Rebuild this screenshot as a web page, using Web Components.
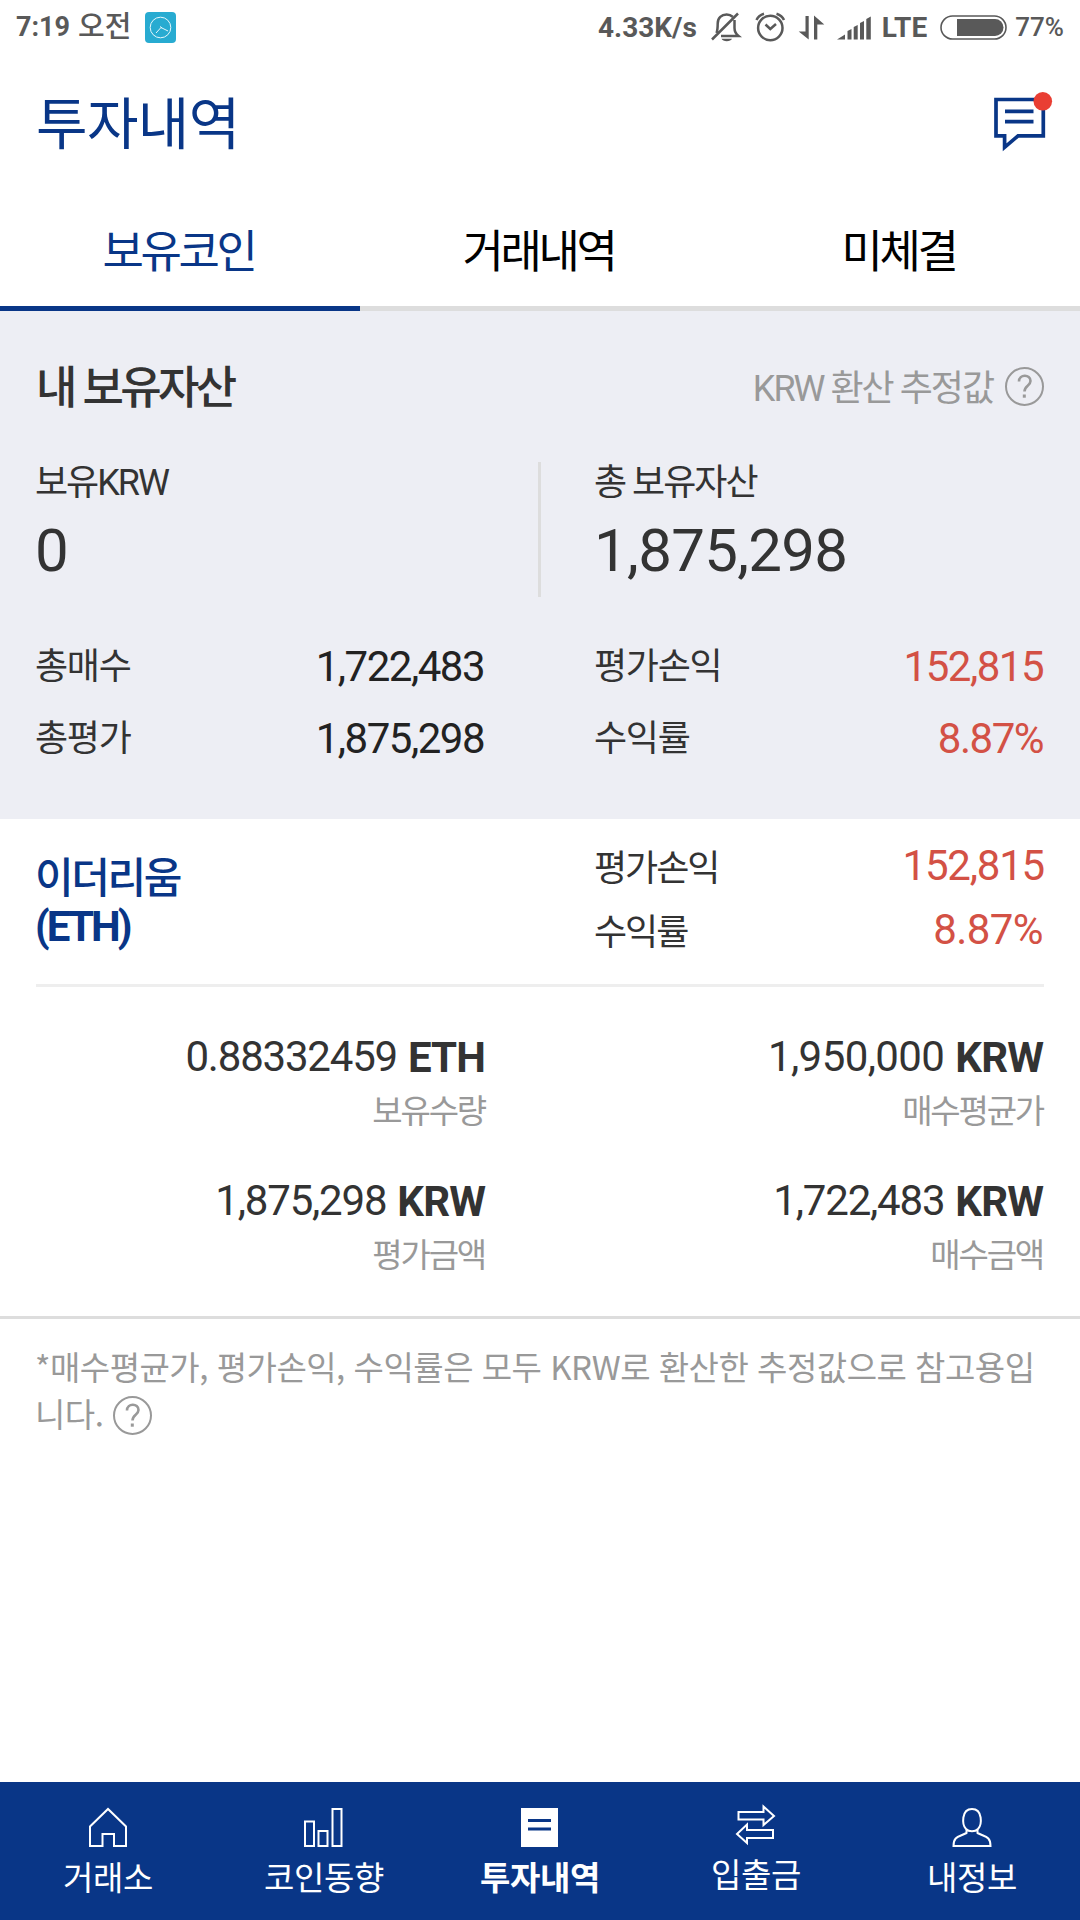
<!DOCTYPE html>
<html lang="ko">
<head>
<meta charset="utf-8">
<title>투자내역</title>
<style>
  html, body {
    margin: 0;
    height: 100%;
    background: #fff;
  }
  body {
    --blue: #093687;
    --red: #d35145;
    --grey: #999;
    font-family: Roboto, "Noto Sans CJK KR", sans-serif;
    font-size: 36px;
    color: #333;
  }
</style>
</head>
<body>
<wallet-app></wallet-app>

<script>
function define(name, html) {
  const template = document.createElement("template");
  template.innerHTML = html;
  customElements.define(name, class extends HTMLElement {
    constructor() {
      super();
      this.attachShadow({ mode: "open" });
      this.shadowRoot.appendChild(template.content.cloneNode(true));
    }
  });
}

define("status-bar", /*html*/ `
  <style>
  :host {
    display: flex;
    justify-content: space-between;
    height: 54px;
    padding: 0 16px 0 16px;
    box-sizing: border-box;
    font-size: 27px;
    font-weight: 700;
    line-height: 55px;
    color: #595959;
    white-space: nowrap;
  }
  div { display: flex; }
  svg { display: block; height: 54px; }
  .ampm { font-size: 29px; font-weight: 500; margin-left: 8px; line-height: 54px; }
  .net { margin-right: 14px; font-size: 28px; }
  .lte { margin-left: 9px; margin-right: 13px; font-size: 28px; line-height: 56px; letter-spacing: .100px; }
  .pct { font-size: 26px; font-weight: 500; margin-left: 8px; line-height: 54px; }
  </style>
  <div>
    <span>7:19</span><span class="ampm">오전</span>
    <svg width="31" viewBox="145 0 31 54" style="margin-left:14px">
      <rect x="145" y="12" width="31" height="31" rx="4" fill="#28abd1"/>
      <circle cx="160.500" cy="27.500" r="10.300" fill="none" stroke="#e8f8fc" stroke-width="1"/>
      <path d="M156 33l5-5.500 7 3.500M160 26.500l2 1.500" fill="none" stroke="#e8f8fc" stroke-width="1"/>
    </svg>
  </div>
  <div>
    <span class="net">4.33K/s</span>
    <svg width="162" viewBox="711 0 162 54" fill="none" stroke="#595959" stroke-width="2.500">
      <path d="M716.500 33c1.200-3 1.200-6 1.200-9.500c0-5.500 3.800-9 9-9c2.300 0 4.300 .7 6 2.200M734.500 20v8c0 4 1.500 6 4 8h-17.500M712 39.500l26-26"/>
      <path d="M721.500 38.800h10.500c-1 3.200-9.500 3.200-10.500 0z" fill="#595959" stroke="none"/>
      <circle cx="770.300" cy="28" r="12.200"/>
      <path d="M765.500 24.500l4.800 4.500 5.700-5M756.500 20c1.200-3 3.800-5.200 7.500-6.300M784 20c-1.200-3-3.800-5.200-7.500-6.300"/>
      <path d="M805.500 16h3.200v23.500l-10-8h6.800zM814 39.500h3.300V24.500h7l-10.300-9z" fill="#595959" stroke="none"/>
      <path d="M837 39.500l8-5v5zM847.500 39.500v-8.500l4-2v10.500zM853.700 39.500v-12.500l4-2v14.500zM860 39.500v-16.500l4-2v18.500zM866.300 39.500v-20.500l4.500-2.500v23z" fill="#595959" stroke="none"/>
    </svg>
    <span class="lte">LTE</span>
    <svg width="67" viewBox="940 0 67 54">
      <rect x="941" y="16" width="65" height="23" rx="11.500" fill="none" stroke="#595959" stroke-width="1.600"/>
      <path d="M957 19h38a8.300 8.300 0 0 1 0 17h-38z" fill="#595959"/>
    </svg>
    <span class="pct">77%</span>
  </div>
`);

define("page-header", /*html*/ `
  <style>
  :host {
    display: flex;
    justify-content: space-between;
    align-items: center;
    height: 142px;
    padding: 0 24px 0 36px;
    box-sizing: border-box;
    color: var(--blue);
  }
  h1 {
    margin: 0;
    font-size: 56px;
    font-weight: 400;
    letter-spacing: -.600px;
    line-height: 142px;
  }
  svg { display: block; }
  </style>
  <h1><slot></slot></h1>
  <svg width="66" height="142" viewBox="990 54 66 142">
    <path d="M996 99.500h47.300v36.300h-25.200l-13.500 11.500v-11.500H996z" fill="none" stroke="#093687" stroke-width="3.700"/>
    <path d="M1005 111.300h28.500M1005 121.700h28.500" stroke="#093687" stroke-width="3.700"/>
    <circle cx="1042.800" cy="101.300" r="9.300" fill="#e93e33"/>
  </svg>
`);

define("tab-bar", /*html*/ `
  <style>
  :host {
    display: grid;
    grid-template-columns: repeat(3, 1fr);
    height: 115px;
  }
  </style>
  <slot></slot>
`);

define("tab-item", /*html*/ `
  <style>
  :host {
    display: block;
    height: 115px;
    padding-right: 3px;
    box-sizing: border-box;
    border-bottom: 5px solid #ddd;
    font-size: 45px;
    letter-spacing: -3.400px;
    line-height: 114px;
    text-align: center;
    color: #000;
  }
  :host([active]) { color: var(--blue); border-color: var(--blue); }
  </style>
  <slot></slot>
`);

define("help-mark", /*html*/ `
  <style>
  :host { display: inline-block; width: 39px; height: 39px; }
  svg { display: block; }
  </style>
  <svg width="39" height="39" viewBox="0 0 39 39" fill="none" stroke="#999">
    <circle cx="19.500" cy="19.500" r="18.500" stroke-width="2"/>
    <path d="M14 14.500c0-7.500 11.500-7.500 11.500-.5c0 5-6 4.500-6 10.500" stroke-width="2.600"/>
    <path d="M19.300 27.500v3.200" stroke-width="3"/>
  </svg>
`);

// label on the left, number on the right
define("stat-row", /*html*/ `
  <style>
  :host {
    display: flex;
    justify-content: space-between;
    height: 72px;
    line-height: 72px;
    letter-spacing: -1.300px;
  }
  .value {
    font-size: 42px;
    letter-spacing: -1.500px;
    margin-right: 1px;
    color: var(--value, #222);
  }
  </style>
  <span><slot></slot></span>
  <span class="value"><slot name="value"></slot></span>
`);

define("asset-summary", /*html*/ `
  <style>
  :host {
    display: block;
    height: 508px;
    padding: 36px 36px 0 35px;
    box-sizing: border-box;
    background: #edeef4;
  }
  header {
    display: flex;
    justify-content: space-between;
    height: 115px;
  }
  h2 {
    margin: 0;
    padding-left: 1px;
    font-size: 45px;
    font-weight: 500;
    letter-spacing: -3.600px;
    word-spacing: 1px;
    line-height: 83px;
  }
  .note {
    display: flex;
    gap: 12px;
    padding-top: 20px;
    line-height: 44px;
    letter-spacing: -2px;
    color: var(--grey);
  }
  .totals, .rows {
    display: grid;
    grid-template-columns: 506px 1fr;
  }
  .totals { height: 133px; margin-bottom: 1px; }
  .total:first-child { border-right: 3px solid #ddd; }
  .total:last-child { padding-left: 53px; }
  .label { line-height: 42px; letter-spacing: -2px; }
  .amount { font-size: 60px; line-height: 93px; letter-spacing: -.700px; }
  .rows { padding-top: 35px; }
  .rows div:first-child { padding-right: 56px; }
  .rows div:last-child { padding-left: 53px; --value: var(--red); }
  </style>
  <header>
    <h2>내 보유자산</h2>
    <div class="note"><span>KRW 환산 추정값</span><help-mark></help-mark></div>
  </header>
  <div class="totals">
    <div class="total">
      <div class="label">보유KRW</div>
      <div class="amount">0</div>
    </div>
    <div class="total">
      <div class="label">총 보유자산</div>
      <div class="amount">1,875,298</div>
    </div>
  </div>
  <div class="rows">
    <div>
      <stat-row>총매수<span slot="value">1,722,483</span></stat-row>
      <stat-row>총평가<span slot="value">1,875,298</span></stat-row>
    </div>
    <div>
      <stat-row>평가손익<span slot="value">152,815</span></stat-row>
      <stat-row>수익률<span slot="value">8.87%</span></stat-row>
    </div>
  </div>
`);

define("coin-figure", /*html*/ `
  <style>
  :host { display: block; height: 144px; text-align: right; }
  .amount {
    display: flex;
    justify-content: flex-end;
    gap: 11px;
    margin-right: 1px;
    font-size: 42px;
    line-height: 50px;
    letter-spacing: var(--spacing, -1.200px);
  }
  b { padding-top: 1px; letter-spacing: -.900px; }
  .label {
    margin-top: 9px;
    margin-right: 1px;
    font-size: 33px;
    line-height: 40px;
    letter-spacing: -2.200px;
    color: var(--grey);
  }
  </style>
  <div class="amount"><slot></slot><b><slot name="unit"></slot></b></div>
  <div class="label"><slot name="label"></slot></div>
`);

define("coin-card", /*html*/ `
  <style>
  :host {
    display: block;
    height: 500px;
    padding: 0 36px;
    box-sizing: border-box;
    border-bottom: 3px solid #ddd;
  }
  .head, .figures {
    display: grid;
    grid-template-columns: 450px 450px;
    justify-content: space-between;
  }
  .head {
    grid-template-columns: 558px 450px;
    height: 168px;
    box-sizing: border-box;
    border-bottom: 3px solid #eee;
  }
  h3 {
    margin: 0 0 0 -1px;
    padding-top: 36px;
    font-size: 42px;
    font-weight: 500;
    letter-spacing: -2.400px;
    line-height: 48px;
    color: var(--blue);
  }
  h3 b { font-weight: 700; letter-spacing: -2.900px; }
  .profit { padding-top: 15px; --value: var(--red); }
  .profit stat-row { height: 64px; line-height: 70px; letter-spacing: -2px; }
  .profit span { letter-spacing: -1.200px; margin-right: -1px; position: relative; top: -3px; }
  .profit .rate { letter-spacing: -.600px; margin-right: 0; }
  .figures { padding-top: 45px; }
  </style>
  <div class="head">
    <h3>이더리움<br><b>(ETH)</b></h3>
    <div class="profit">
      <stat-row>평가손익<span slot="value">152,815</span></stat-row>
      <stat-row>수익률<span slot="value" class="rate">8.87%</span></stat-row>
    </div>
  </div>
  <div class="figures">
    <coin-figure>0.88332459<span slot="unit">ETH</span><span slot="label">보유수량</span></coin-figure>
    <coin-figure style="--spacing:-.600px">1,950,000<span slot="unit">KRW</span><span slot="label">매수평균가</span></coin-figure>
    <coin-figure>1,875,298<span slot="unit">KRW</span><span slot="label">평가금액</span></coin-figure>
    <coin-figure>1,722,483<span slot="unit">KRW</span><span slot="label">매수금액</span></coin-figure>
  </div>
`);

define("foot-note", /*html*/ `
  <style>
  :host {
    display: block;
    padding: 24px 36px 0 35px;
    font-family: "Noto Sans CJK KR", sans-serif;
    font-size: 33px;
    line-height: 47px;
    letter-spacing: -.500px;
    color: var(--grey);
    white-space: nowrap;
  }
  .last { display: flex; gap: 10px; }
  help-mark { margin-top: 6px; }
  </style>
  <div><slot></slot></div>
  <div class="last"><slot name="last"></slot><help-mark></help-mark></div>
`);

define("nav-bar", /*html*/ `
  <style>
  :host {
    display: grid;
    grid-template-columns: repeat(5, 1fr);
    height: 138px;
    background: var(--blue);
  }
  </style>
  <slot></slot>
`);

define("nav-item", /*html*/ `
  <style>
  :host {
    display: flex;
    flex-direction: column;
    align-items: center;
    padding-top: 22px;
    font-size: 33px;
    line-height: 48px;
    letter-spacing: -.400px;
    color: #fff;
  }
  :host([active]) { font-weight: 700; }
  :host([raised]) { padding-top: 19px; }
  ::slotted(svg) {
    display: block;
    width: 46px;
    height: 46px;
    margin-bottom: 5px;
    fill: none;
    stroke: #fff;
    stroke-width: 2;
  }
  </style>
  <slot name="icon"></slot>
  <span><slot></slot></span>
`);

define("wallet-app", /*html*/ `
  <style>
  :host {
    display: flex;
    flex-direction: column;
    width: 1080px;
    height: 1920px;
    overflow: hidden;
    background: #fff;
  }
  nav-bar { margin-top: auto; }
  </style>
  <status-bar></status-bar>
  <page-header>투자내역</page-header>
  <tab-bar>
    <tab-item active>보유코인</tab-item>
    <tab-item>거래내역</tab-item>
    <tab-item>미체결</tab-item>
  </tab-bar>
  <asset-summary></asset-summary>
  <coin-card></coin-card>
  <foot-note>*매수평균가, 평가손익, 수익률은 모두 KRW로 환산한 추정값으로 참고용입<span slot="last">니다.</span></foot-note>
  <nav-bar>
    <nav-item>
      <svg slot="icon" viewBox="0 0 46 46"><path d="M5 42V22.500L23 5l18 17.500V42H29V30H17.500v12z"/></svg>거래소
    </nav-item>
    <nav-item>
      <svg slot="icon" viewBox="0 0 46 46"><path d="M4 17.500h9V42h-9zM17.500 27h9v15h-9zM31.500 5h9v37h-9z"/></svg>코인동향
    </nav-item>
    <nav-item active>
      <svg slot="icon" viewBox="0 0 46 46"><path d="M4 4h37v39H4z" fill="#fff" stroke="none"/><path d="M11 16.500h23M11 25h23" stroke="#093687" stroke-width="3"/></svg>투자내역
    </nav-item>
    <nav-item raised>
      <svg slot="icon" viewBox="0 0 46 46"><path d="M5.500 11h25V5.500L41 15 30.500 24V18.500h-25zM40 29H14v-5.500L4 33l10 9V37h26z"/></svg>입출금
    </nav-item>
    <nav-item>
      <svg slot="icon" viewBox="0 0 46 46"><path d="M17 25c-4-4-5-20 6-20s10 16 6 20c-3 3-9 3-12 0zM17.500 25v4C10 33 4.500 32 4.500 42h37c0-10-5.500-9-13-13v-4"/></svg>내정보
    </nav-item>
  </nav-bar>
`);
</script>
</body>
</html>
